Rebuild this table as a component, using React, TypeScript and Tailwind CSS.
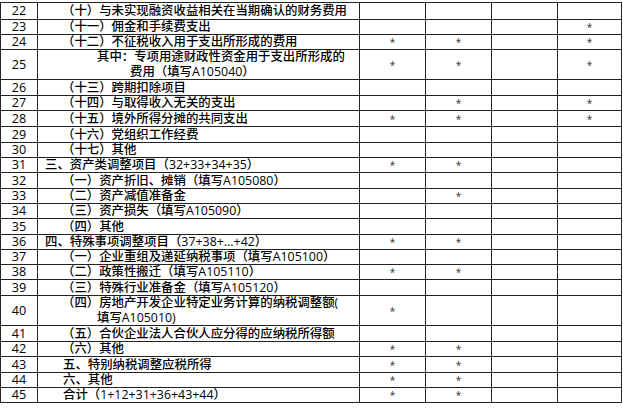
import React from 'react'

type Row = {
  no: string
  h: string
  lines: { text: string; pad: string }[]
  stars: boolean[]
}

const P = 'pl-[24px]'

const rows: Row[] = [
  { no: '22', h: 'h-[17px]', lines: [{ text: '（十）与未实现融资收益相关在当期确认的财务费用', pad: P }], stars: [false, false, false, false] },
  { no: '23', h: 'h-[15px]', lines: [{ text: '（十一）佣金和手续费支出', pad: P }], stars: [false, false, false, true] },
  { no: '24', h: 'h-[15px]', lines: [{ text: '（十二）不征税收入用于支出所形成的费用', pad: P }], stars: [true, true, false, true] },
  {
    no: '25',
    h: 'h-[30px]',
    lines: [
      { text: '其中：专项用途财政性资金用于支出所形成的', pad: 'pl-[59px]' },
      { text: '费用（填写A105040）', pad: 'pl-[92px]' },
    ],
    stars: [true, true, false, true],
  },
  { no: '26', h: 'h-[16px]', lines: [{ text: '（十三）跨期扣除项目', pad: P }], stars: [false, false, false, false] },
  { no: '27', h: 'h-[15px]', lines: [{ text: '（十四）与取得收入无关的支出', pad: P }], stars: [false, true, false, true] },
  { no: '28', h: 'h-[16px]', lines: [{ text: '（十五）境外所得分摊的共同支出', pad: P }], stars: [true, true, false, true] },
  { no: '29', h: 'h-[16px]', lines: [{ text: '（十六）党组织工作经费', pad: P }], stars: [false, false, false, false] },
  { no: '30', h: 'h-[15px]', lines: [{ text: '（十七）其他', pad: P }], stars: [false, false, false, false] },
  { no: '31', h: 'h-[15px]', lines: [{ text: '三、资产类调整项目（32+33+34+35）', pad: 'pl-[7px]' }], stars: [true, true, false, false] },
  { no: '32', h: 'h-[16px]', lines: [{ text: '（一）资产折旧、摊销（填写A105080）', pad: P }], stars: [false, false, false, false] },
  { no: '33', h: 'h-[15px]', lines: [{ text: '（二）资产减值准备金', pad: P }], stars: [false, true, false, false] },
  { no: '34', h: 'h-[15px]', lines: [{ text: '（三）资产损失（填写A105090）', pad: P }], stars: [false, false, false, false] },
  { no: '35', h: 'h-[16px]', lines: [{ text: '（四）其他', pad: P }], stars: [false, false, false, false] },
  { no: '36', h: 'h-[15px]', lines: [{ text: '四、特殊事项调整项目（37+38+...+42）', pad: 'pl-[7px]' }], stars: [true, true, false, false] },
  { no: '37', h: 'h-[15px]', lines: [{ text: '（一）企业重组及递延纳税事项（填写A105100）', pad: P }], stars: [false, false, false, false] },
  { no: '38', h: 'h-[15px]', lines: [{ text: '（二）政策性搬迁（填写A105110）', pad: P }], stars: [true, true, false, false] },
  { no: '39', h: 'h-[16px]', lines: [{ text: '（三）特殊行业准备金（填写A105120）', pad: P }], stars: [false, false, false, false] },
  {
    no: '40',
    h: 'h-[30px]',
    lines: [
      { text: '（四）房地产开发企业特定业务计算的纳税调整额(', pad: P },
      { text: '填写A105010)', pad: 'pl-[59px]' },
    ],
    stars: [true, false, false, false],
  },
  { no: '41', h: 'h-[16px]', lines: [{ text: '（五）合伙企业法人合伙人应分得的应纳税所得额', pad: P }], stars: [false, false, false, false] },
  { no: '42', h: 'h-[15px]', lines: [{ text: '（六）其他', pad: P }], stars: [true, true, false, false] },
  { no: '43', h: 'h-[16px]', lines: [{ text: '五、特别纳税调整应税所得', pad: 'pl-[25px]' }], stars: [true, true, false, false] },
  { no: '44', h: 'h-[15px]', lines: [{ text: '六、其他', pad: 'pl-[25px]' }], stars: [true, true, false, false] },
  { no: '45', h: 'h-[15px]', lines: [{ text: '合计（1+12+31+36+43+44）', pad: 'pl-[25px]' }], stars: [true, true, false, false] },
]

function StarCell({ on }: { on: boolean }) {
  return (
    <div className="flex items-center justify-center border-r border-[#222] text-[10px] leading-[8px] text-[#333]">
      {on ? '*' : ''}
    </div>
  )
}

export default function App() {
  return (
    <div
      className="w-[623px] h-[410px] bg-white pt-[2px] text-black"
      style={{ fontFamily: '"Open Sans", "Noto Sans CJK SC", sans-serif' }}
    >
      <div className="w-[622px] border-t border-l border-[#222]">
        {rows.map(r => (
          <div
            key={r.no}
            className={`grid grid-cols-[37px_322px_66px_66px_66px_64px] border-b border-[#222] ${r.h}`}
          >
            <div className="flex items-center justify-center border-r border-[#222] text-[12.6px] leading-[12px] font-medium">
              {r.no}
            </div>
            <div className="flex flex-col justify-center gap-[3px] border-r border-[#222] text-[12.4px] leading-[12px] font-medium whitespace-nowrap">
              {r.lines.map((l, i) => (
                <div key={i} className={l.pad}>
                  {l.text}
                </div>
              ))}
            </div>
            {r.stars.map((s, i) => (
              <StarCell key={i} on={s} />
            ))}
          </div>
        ))}
      </div>
    </div>
  )
}
